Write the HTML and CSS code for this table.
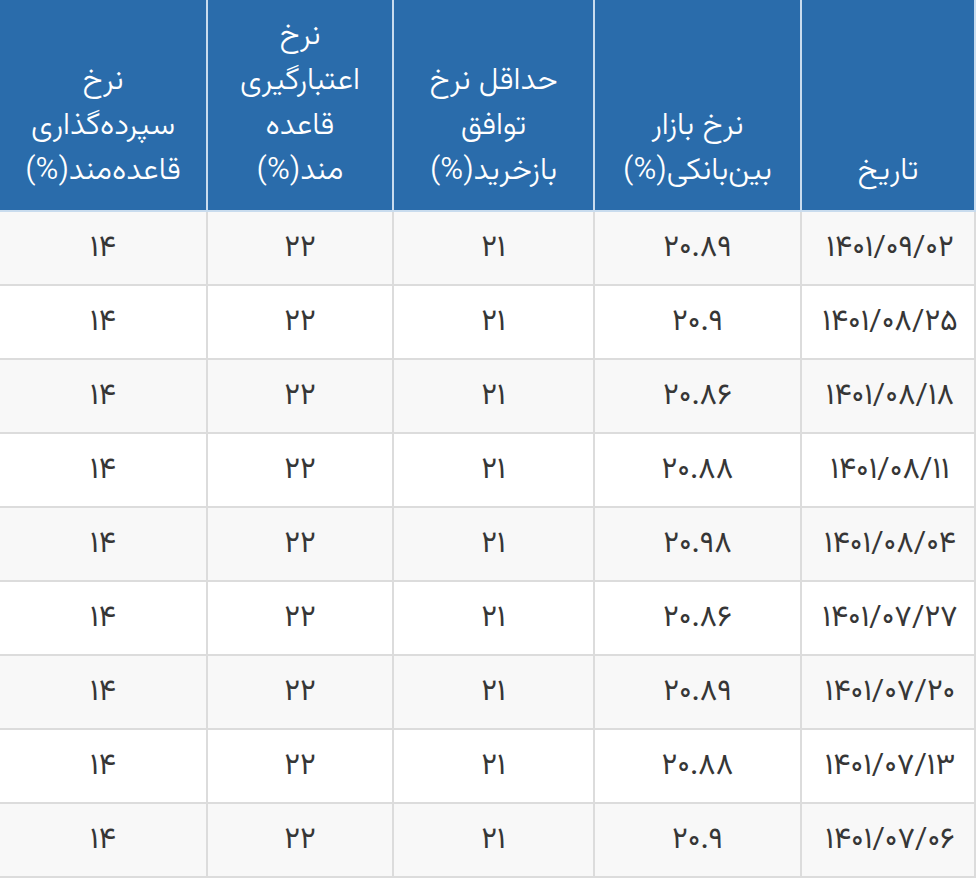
FILE: index.html
```html
<!DOCTYPE html>
<html lang="fa" dir="rtl">
<head>
<meta charset="utf-8">
<title>نرخ‌ها</title>
<link rel="stylesheet" href="styles.css">
</head>
<body>
<table class="rates">
  <colgroup>
    <col class="c-date">
    <col class="c-inter">
    <col class="c-repo">
    <col class="c-credit">
    <col class="c-deposit">
  </colgroup>
  <thead>
    <tr>
      <th>تاریخ</th>
      <th>نرخ بازار<br>بین‌بانکی(%)</th>
      <th>حداقل نرخ<br>توافق<br>بازخرید(%)</th>
      <th>نرخ<br>اعتبارگیری<br>قاعده<br>مند(%)</th>
      <th>نرخ<br>سپرده‌گذاری<br>قاعده‌مند(%)</th>
    </tr>
  </thead>
  <tbody>
    <tr><td>۱۴۰۱/۰۹/۰۲</td><td>۲۰.۸۹</td><td>۲۱</td><td>۲۲</td><td>۱۴</td></tr>
    <tr><td>۱۴۰۱/۰۸/۲۵</td><td>۲۰.۹</td><td>۲۱</td><td>۲۲</td><td>۱۴</td></tr>
    <tr><td>۱۴۰۱/۰۸/۱۸</td><td>۲۰.۸۶</td><td>۲۱</td><td>۲۲</td><td>۱۴</td></tr>
    <tr><td>۱۴۰۱/۰۸/۱۱</td><td>۲۰.۸۸</td><td>۲۱</td><td>۲۲</td><td>۱۴</td></tr>
    <tr><td>۱۴۰۱/۰۸/۰۴</td><td>۲۰.۹۸</td><td>۲۱</td><td>۲۲</td><td>۱۴</td></tr>
    <tr><td>۱۴۰۱/۰۷/۲۷</td><td>۲۰.۸۶</td><td>۲۱</td><td>۲۲</td><td>۱۴</td></tr>
    <tr><td>۱۴۰۱/۰۷/۲۰</td><td>۲۰.۸۹</td><td>۲۱</td><td>۲۲</td><td>۱۴</td></tr>
    <tr><td>۱۴۰۱/۰۷/۱۳</td><td>۲۰.۸۸</td><td>۲۱</td><td>۲۲</td><td>۱۴</td></tr>
    <tr><td>۱۴۰۱/۰۷/۰۶</td><td>۲۰.۹</td><td>۲۱</td><td>۲۲</td><td>۱۴</td></tr>
  </tbody>
</table>
</body>
</html>
```
FILE: styles.css
```css
html, body {
  margin: 0;
  padding: 0;
  background: #ffffff;
}

body {
  font-family: "Vazirmatn", "Vazir", "Noto Sans Arabic", "DejaVu Sans", "Noto Sans", sans-serif;
}

.rates {
  direction: rtl;
  width: 978px;
  margin-right: 2px;
  margin-left: -2px;
  border-collapse: collapse;
  table-layout: fixed;
}

.c-date { width: 174px; }
.c-inter { width: 207px; }
.c-repo { width: 201px; }
.c-credit { width: 186px; }
.c-deposit { width: auto; }

.rates th {
  height: 194px;
  background: #2a6cab;
  color: #ffffff;
  font-weight: 300;
  font-size: 31px;
  line-height: 45px;
  text-align: center;
  vertical-align: bottom;
  padding: 0 2px 16px;
  border-left: 2px solid #c9dcee;
  border-right: 2px solid #c9dcee;
  border-bottom: 2px solid #c9dcee;
}

.rates td {
  height: 72px;
  padding: 0;
  text-align: center;
  vertical-align: middle;
  font-size: 30px;
  font-weight: 400;
  color: #363636;
  border: 2px solid #dcdcdc;
}

.rates td:first-child {
  letter-spacing: 3.5px;
  padding-left: 4px;
}

.rates tbody tr:nth-child(odd) td {
  background: #f8f8f8;
}

.rates tbody tr:nth-child(even) td {
  background: #ffffff;
}
```
